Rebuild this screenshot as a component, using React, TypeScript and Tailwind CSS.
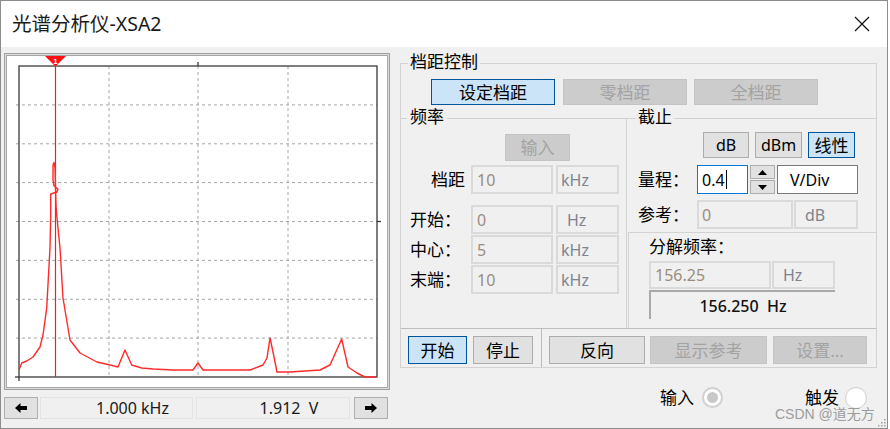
import React from "react";

const normalBtn = "flex items-center justify-center border bg-[#e1e1e1] border-[#adadad] text-black leading-none";
const selectedBtn = "flex items-center justify-center border bg-[#cce4f7] border-[#005499] text-black leading-none";
const disabledBtn = "flex items-center justify-center border bg-[#cccccc] border-[#c4c4c4] text-[#a3a3a3] leading-none";
const fieldBox = "flex items-center border-2 border-[#dadada] bg-[#f0f0f0] text-[16px] leading-none";
const numColor = "text-[#9a8d7f]";
const unitColor = "text-[#7f8490]";

const curve: [number, number][] = [
  [19, 370], [21.7, 363], [26.7, 361], [33, 357], [40, 347], [43, 335], [46.7, 308], [50, 248],
  [50.7, 215], [50.7, 194], [57, 192], [58, 189], [54, 186], [53, 180], [53, 165], [54, 162.5],
  [55, 168], [56, 205], [56.7, 215], [60, 248], [63, 298], [70, 340], [80, 353], [97, 362],
  [110, 365], [118, 367], [125, 350], [131.7, 365], [141.7, 368], [153, 369], [173, 370],
  [193, 370], [198, 363], [203, 370], [250, 370], [263, 365], [267, 358], [270, 338], [273, 352],
  [277, 372], [290, 372], [320, 370], [330, 365], [341.7, 339], [348, 367], [357, 373],
  [365, 377], [376, 377],
];

function Spectrum() {
  const vx = [109, 198, 288];
  const hy = [104.9, 143.8, 182.6, 221.5, 260.4, 299.3, 338.1];
  return (
    <svg width="380" height="331" viewBox="7 56 380 331" className="block">
      {vx.map((x) => (
        <line key={"v" + x} x1={x} y1={66} x2={x} y2={377} stroke="#a6a6a6" strokeWidth="1" strokeDasharray="3 3" />
      ))}
      {hy.map((y) => (
        <line key={"h" + y} x1={16} y1={y} x2={377} y2={y} stroke="#a6a6a6" strokeWidth="1" strokeDasharray="3 3" />
      ))}
      <rect x="19" y="66" width="358" height="311" fill="none" stroke="#3a3a3a" strokeWidth="1.3" />
      <line x1="15" y1="377" x2="19" y2="377" stroke="#3a3a3a" strokeWidth="1.3" />
      <line x1="19" y1="377" x2="19" y2="381" stroke="#3a3a3a" strokeWidth="1.3" />
      <line x1="198" y1="62" x2="198" y2="66" stroke="#3a3a3a" strokeWidth="1.3" />
      <line x1="377" y1="221.5" x2="381" y2="221.5" stroke="#3a3a3a" strokeWidth="1.3" />
      <line x1="55.5" y1="66" x2="55.5" y2="377" stroke="#ff1a1a" strokeWidth="1.2" />
      <polyline
        points={curve.map((p) => p.join(",")).join(" ")}
        fill="none"
        stroke="#ff2a2a"
        strokeWidth="1.4"
        strokeLinejoin="round"
      />
      <polygon points="45,56 66,56 55.5,66.5" fill="#ff1010" />
      <text x="55.5" y="63.5" textAnchor="middle" fontSize="8" fontWeight="bold" fill="#fff" fontFamily="Liberation Sans, sans-serif">1</text>
    </svg>
  );
}

function ArrowIcon({ dir }: { dir: "left" | "right" }) {
  return (
    <svg width="12" height="10" viewBox="0 0 12 10">
      {dir === "left" ? (
        <path d="M0 5 L5.5 0 L5.5 3 L12 3 L12 7 L5.5 7 L5.5 10 Z" fill="#000" />
      ) : (
        <path d="M12 5 L6.5 0 L6.5 3 L0 3 L0 7 L6.5 7 L6.5 10 Z" fill="#000" />
      )}
    </svg>
  );
}

export default function App() {
  return (
    <div className="w-[890px] h-[429px] bg-white font-['Noto_Sans','Noto_Sans_CJK_SC',sans-serif] text-black">
      <div className="relative w-[888px] h-[429px] border border-[#8c8c8c] bg-[#f0f0f0] flex flex-col overflow-hidden">
        {/* Title bar */}
        <div className="h-[46px] shrink-0 bg-white flex items-center justify-between pl-[11px] pr-[17px]">
          <span className="text-[19.5px] leading-none text-[#1a1a1a]">光谱分析仪-XSA2</span>
          <svg width="16" height="16" viewBox="0 0 16 16">
            <path d="M1 1 L15 15 M15 1 L1 15" stroke="#111" strokeWidth="1.2" />
          </svg>
        </div>

        {/* Body */}
        <div className="flex flex-1">
          {/* Left column */}
          <div className="w-[389px] pl-[3px] shrink-0">
            <div className="mt-[6px] w-[386px] h-[337px] border border-[#a0a0a0]">
              <div className="w-full h-full border border-[#dcdcdc]">
                <div className="w-full h-full border border-[#a8a8a8] bg-white">
                  <Spectrum />
                </div>
              </div>
            </div>
            <div className="mt-[7px] flex h-[22px] w-[386px]">
              <div className={normalBtn + " w-[34px] h-full"}>
                <ArrowIcon dir="left" />
              </div>
              <div className="ml-[2px] w-[153px] h-full border border-[#e4e4e4] flex items-center justify-center pl-[32px] text-[16px] leading-none text-[#1a1a1a]">
                1.000 kHz
              </div>
              <div className="ml-[3px] w-[154px] h-full border border-[#e4e4e4] flex items-center justify-center pl-[32px] text-[16px] leading-none text-[#1a1a1a] whitespace-pre">
                {"1.912  V"}
              </div>
              <div className={normalBtn + " ml-[4px] w-[34px] h-full"}>
                <ArrowIcon dir="right" />
              </div>
            </div>
          </div>

          {/* Right column */}
          <div className="ml-[10px] mt-[16px] w-[477px] shrink-0">
            <div className="relative w-[477px] h-[305px] border border-[#d3d3d3] flex flex-col">
              <span className="absolute left-[7px] top-[-12px] px-[2px] bg-[#f0f0f0] text-[17px] leading-[20px]">档距控制</span>
              {/* Span buttons */}
              <div className="h-[54px] shrink-0 flex items-start pt-[15px]">
                <div className={selectedBtn + " ml-[30px] w-[124px] h-[26px] text-[17px]"}>设定档距</div>
                <div className={disabledBtn + " ml-[8px] w-[124px] h-[26px] text-[17px]"}>零档距</div>
                <div className={disabledBtn + " ml-[7px] w-[124px] h-[26px] text-[17px]"}>全档距</div>
              </div>
              {/* Middle */}
              <div className="h-[210px] shrink-0 flex">
                {/* 频率 */}
                <div className="relative w-[226px] h-full border-t border-r border-[#d3d3d3] flex flex-col">
                  <span className="absolute left-[6px] top-[-12px] px-[3px] bg-[#f0f0f0] text-[17px] leading-[20px]">频率</span>
                  <div className={disabledBtn + " mt-[15px] ml-[104px] w-[65px] h-[27px] text-[17px]"}>输入</div>
                  <div className="mt-[4px] flex items-center h-[29px]">
                    <div className="w-[70px] pr-[6px] text-right text-[17px] leading-none">档距</div>
                    <div className={fieldBox + " w-[82px] h-full pl-[4px] " + numColor}>10</div>
                    <div className={fieldBox + " ml-[3px] w-[63px] h-full pl-[3px] " + unitColor}>kHz</div>
                  </div>
                  <div className="mt-[11px] flex items-center h-[29px]">
                    <div className="w-[70px] pl-[9px] text-[17px] leading-none">开始：</div>
                    <div className={fieldBox + " w-[82px] h-full pl-[4px] " + numColor}>0</div>
                    <div className={fieldBox + " ml-[3px] w-[63px] h-full pl-[9px] " + unitColor}>Hz</div>
                  </div>
                  <div className="mt-[1px] flex items-center h-[29px]">
                    <div className="w-[70px] pl-[9px] text-[17px] leading-none">中心：</div>
                    <div className={fieldBox + " w-[82px] h-full pl-[4px] " + numColor}>5</div>
                    <div className={fieldBox + " ml-[3px] w-[63px] h-full pl-[3px] " + unitColor}>kHz</div>
                  </div>
                  <div className="mt-[1px] flex items-center h-[29px]">
                    <div className="w-[70px] pl-[9px] text-[17px] leading-none">末端：</div>
                    <div className={fieldBox + " w-[82px] h-full pl-[4px] " + numColor}>10</div>
                    <div className={fieldBox + " ml-[3px] w-[63px] h-full pl-[3px] " + unitColor}>kHz</div>
                  </div>
                </div>
                {/* Right: 截止 + 分解频率 */}
                <div className="w-[249px] h-full flex flex-col">
                  <div className="relative h-[114px] border-t border-[#d3d3d3] flex flex-col">
                    <span className="absolute left-[9px] top-[-12px] px-[2px] bg-[#f0f0f0] text-[17px] leading-[20px]">截止</span>
                    <div className="mt-[13px] ml-[76px] flex h-[26px]">
                      <div className={normalBtn + " w-[46px] h-full text-[16px]"}>dB</div>
                      <div className={normalBtn + " ml-[6px] w-[47px] h-full text-[16px]"}>dBm</div>
                      <div className={selectedBtn + " ml-[6px] w-[47px] h-full text-[17px]"}>线性</div>
                    </div>
                    <div className="mt-[7px] flex items-center h-[29px]">
                      <div className="w-[70px] pl-[11px] text-[17px] leading-none">量程：</div>
                      <div className="w-[51px] h-full border border-[#0078d7] bg-white flex items-center pl-[4px] text-[16px] leading-none">
                        <span>0.4</span>
                        <span className="ml-[1px] w-[1px] h-[19px] bg-black"></span>
                      </div>
                      <div className="ml-[2px] w-[25px] h-full flex flex-col">
                        <div className="h-[14px] border border-[#adadad] bg-[#e1e1e1] flex items-center justify-center">
                          <svg width="9" height="5" viewBox="0 0 9 5"><path d="M0 5 L4.5 0 L9 5 Z" fill="#000" /></svg>
                        </div>
                        <div className="mt-[1px] h-[14px] border border-[#adadad] bg-[#e1e1e1] flex items-center justify-center">
                          <svg width="9" height="5" viewBox="0 0 9 5"><path d="M0 0 L4.5 5 L9 0 Z" fill="#000" /></svg>
                        </div>
                      </div>
                      <div className="ml-[2px] w-[81px] h-full border border-[#7a7a7a] bg-white flex items-center pl-[12px] text-[16px] leading-none">
                        V/Div
                      </div>
                    </div>
                    <div className="mt-[6px] flex items-center h-[29px]">
                      <div className="w-[70px] pl-[11px] text-[17px] leading-none">参考：</div>
                      <div className={fieldBox + " w-[96px] h-full pl-[3px] " + numColor}>0</div>
                      <div className={fieldBox + " ml-[1px] w-[64px] h-full pl-[9px] " + unitColor}>dB</div>
                    </div>
                  </div>
                  <div className="ml-[1px] h-[96px] border-t border-l border-[#d3d3d3] flex flex-col">
                    <div className="mt-[4px] pl-[20px] text-[17px] leading-[20px]">分解频率：</div>
                    <div className="mt-[4px] ml-[20px] flex h-[28px]">
                      <div className={fieldBox + " w-[122px] h-full pl-[4px] " + numColor}>156.25</div>
                      <div className={fieldBox + " ml-[1px] w-[63px] h-full pl-[9px] " + unitColor}>Hz</div>
                    </div>
                    <div className="mt-[1px] ml-[20px] w-[186px] h-[29px] border-t-2 border-l-2 border-[#a9a9a9] flex items-center justify-center text-[16px] leading-none font-medium text-[#111] whitespace-pre">
                      {"156.250  Hz"}
                    </div>
                  </div>
                </div>
              </div>
              {/* Bottom */}
              <div className="flex-1 flex border-t border-[#bdbdbd]">
                <div className="w-[141px] h-full border-r border-[#bdbdbd] flex items-start pt-[7px]">
                  <div className={selectedBtn + " ml-[7px] w-[59px] h-[28px] text-[17px]"}>开始</div>
                  <div className={normalBtn + " ml-[6px] w-[60px] h-[28px] text-[17px]"}>停止</div>
                </div>
                <div className="flex-1 h-full flex items-start pt-[7px]">
                  <div className={normalBtn + " ml-[7px] w-[96px] h-[28px] text-[17px]"}>反向</div>
                  <div className={disabledBtn + " ml-[5px] w-[117px] h-[28px] text-[17px]"}>显示参考</div>
                  <div className={disabledBtn + " ml-[6px] w-[94px] h-[28px] text-[17px]"}>设置...</div>
                </div>
              </div>
            </div>
            {/* Radios */}
            <div className="mt-[19px] flex items-center h-[21px]">
              <span className="ml-[260px] text-[17px] leading-none">输入</span>
              <div className="ml-[8px] w-[21px] h-[21px] rounded-full border-2 border-[#d0d0d0] bg-white flex items-center justify-center">
                <div className="w-[11px] h-[11px] rounded-full bg-[#c8c8c8]"></div>
              </div>
              <span className="ml-[82px] text-[17px] leading-none">触发</span>
              <div className="ml-[6px] w-[22px] h-[22px] rounded-full border border-[#cfcfcf] bg-white"></div>
            </div>
          </div>
        </div>

        {/* Watermark */}
        <span className="absolute left-[774px] top-[404px] text-[14px] leading-[18px] text-[#9c9c9c] font-['Liberation_Sans','Noto_Sans_CJK_SC',sans-serif]">
          CSDN @道无方
        </span>
        {/* Resize grip */}
        <svg className="absolute right-[1px] bottom-[1px]" width="10" height="10" viewBox="0 0 10 10">
          <rect x="8" y="2" width="1.5" height="1.5" fill="#a0a0a0" />
          <rect x="5" y="5" width="1.5" height="1.5" fill="#a0a0a0" />
          <rect x="8" y="5" width="1.5" height="1.5" fill="#a0a0a0" />
          <rect x="2" y="8" width="1.5" height="1.5" fill="#a0a0a0" />
          <rect x="5" y="8" width="1.5" height="1.5" fill="#a0a0a0" />
          <rect x="8" y="8" width="1.5" height="1.5" fill="#a0a0a0" />
        </svg>
      </div>
    </div>
  );
}
